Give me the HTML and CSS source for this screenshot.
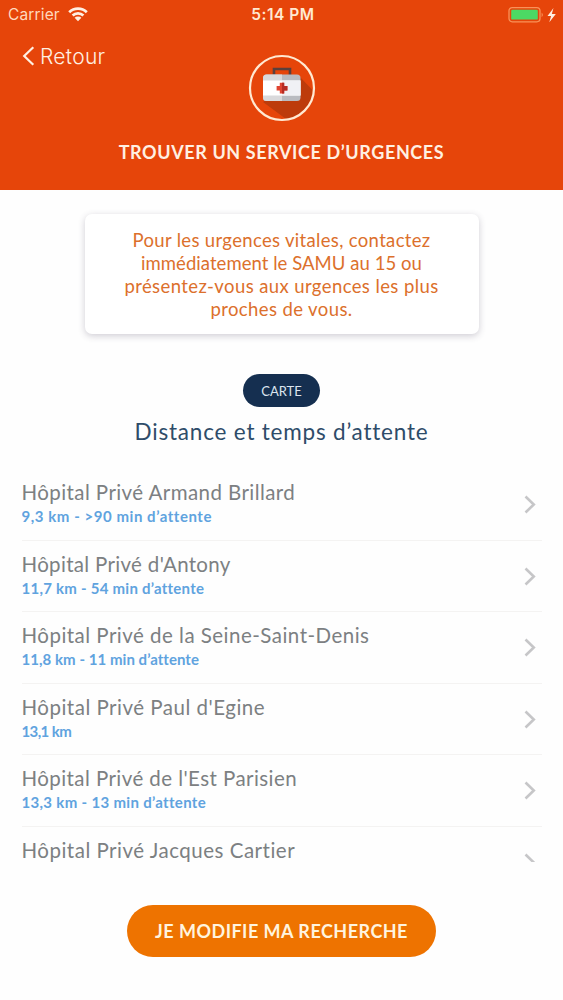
FILE: index.html
```html
<!DOCTYPE html>
<html lang="fr">
<head>
<meta charset="utf-8">
<title>Trouver un service d’urgences</title>
<link rel="stylesheet" href="styles.css">
</head>
<body>
<header class="header">
  <div class="status">
    <div class="status-left"><span class="carrier">Carrier</span>
      <svg width="20" height="15" viewBox="0 0 20 15" fill="none" stroke="#fff0e2" stroke-width="2.7"><path d="M1.2 5.2a12.400 12.400 0 0 1 17.600 0M4.600 8.500a7.700 7.700 0 0 1 10.800 0"/><path d="M10 14.2 6.6 10.8a4.9 4.9 0 0 1 6.8 0z" fill="#fff0e2" stroke="none"/></svg>
    </div>
    <span class="clock">5:14 PM</span>
    <svg class="battery" width="50" height="18" viewBox="0 0 50 18"><rect x="1" y="1.6" width="31" height="14.2" rx="3.2" fill="none" stroke="#f99258" stroke-width="1.3"/><rect x="3.2" y="3.8" width="26.6" height="9.8" rx="1.2" fill="#4cd964"/><path d="M33.6 6.4q2.6 2.4 0 4.8z" fill="#f99258"/><path d="M45.500 2 39.500 10h3.6l-1.8 6.200 6.500-8.200h-4z" fill="#fff0e2"/></svg>
  </div>
  <div class="top">
    <a class="back"><svg width="13" height="20" viewBox="0 0 13 20" fill="none" stroke="#fff0e2" stroke-width="2.2"><path d="M11.3 1.2 2.2 10l9.1 8.8"/></svg><span>Retour</span></a>
    <svg class="kit" width="68" height="68" viewBox="0 0 68 68">
      <path d="M15 48 51 22l13.5 14A31 31 0 0 1 38 65z" fill="#bd3b0b"/>
      <path d="M26 21v-6h16v6" fill="none" stroke="#5b403c" stroke-width="2.600"/>
      <rect x="15" y="20.5" width="37.5" height="26.5" rx="3.5" fill="#b9bbc0"/>
      <path d="M34 20.5H18.5A3.5 3.5 0 0 0 15 24v19.500a3.500 3.500 0 0 0 3.500 3.500H34z" fill="#d9d9db"/>
      <path d="M15 26.500h37.500v15H15z" fill="#fff"/><path d="M34 26.500h18.500v15H34z" fill="#f0f1f5"/>
      <path d="M31.800 28.800h4.400v3.200h3.200v4.400h-3.200v3.200h-4.400v-3.200h-3.200V32h3.200z" fill="#e04431"/>
      <path d="M34 28.800h2.200v3.200h3.200v4.400h-3.200v3.200H34z" fill="#b52c24"/>
      <circle cx="34" cy="34" r="32" fill="none" stroke="#ffe9d2" stroke-width="2.200"/>
    </svg>
  </div>
  <h1 class="title">TROUVER UN SERVICE D’URGENCES</h1>
</header>
<main class="content">
  <p class="alert"><span class="a1">Pour les urgences vitales, contactez</span><br><span class="a2">immédiatement le SAMU au 15 ou</span><br><span class="a3">présentez-vous aux urgences les plus</span><br><span class="a4">proches de vous.</span></p>
  <button class="map">CARTE</button>
  <h2 class="subtitle">Distance et temps d’attente</h2>
  <ul class="list">
    <li class="row"><div><p class="name n1">Hôpital Privé Armand Brillard</p><p class="info i1">9,3 km - &gt;90 min d’attente</p></div><svg class="chevron" width="12" height="19" viewBox="0 0 12 19"><path d="m1.500 1.500 8.300 8-8.300 8"/></svg></li>
    <li class="row"><div><p class="name n2">Hôpital Privé d'Antony</p><p class="info i2">11,7 km - 54 min d’attente</p></div><svg class="chevron" width="12" height="19" viewBox="0 0 12 19"><path d="m1.500 1.500 8.300 8-8.300 8"/></svg></li>
    <li class="row"><div><p class="name n3">Hôpital Privé de la Seine-Saint-Denis</p><p class="info i3">11,8 km - 11 min d’attente</p></div><svg class="chevron" width="12" height="19" viewBox="0 0 12 19"><path d="m1.500 1.500 8.300 8-8.300 8"/></svg></li>
    <li class="row"><div><p class="name n4">Hôpital Privé Paul d'Egine</p><p class="info i4">13,1 km</p></div><svg class="chevron" width="12" height="19" viewBox="0 0 12 19"><path d="m1.500 1.500 8.300 8-8.300 8"/></svg></li>
    <li class="row"><div><p class="name n5">Hôpital Privé de l'Est Parisien</p><p class="info i5">13,3 km - 13 min d’attente</p></div><svg class="chevron" width="12" height="19" viewBox="0 0 12 19"><path d="m1.500 1.500 8.300 8-8.300 8"/></svg></li>
    <li class="row"><div><p class="name n6">Hôpital Privé Jacques Cartier</p></div><svg class="chevron" width="12" height="19" viewBox="0 0 12 19"><path d="m1.500 1.500 8.300 8-8.300 8"/></svg></li>
  </ul>
  <button class="cta">JE MODIFIE MA RECHERCHE</button>
</main>
</body>
</html>
```
FILE: styles.css
```css
* { box-sizing: border-box; margin: 0; padding: 0; }
body { width: 563px; height: 1000px; overflow: hidden; background: #fefefe; font-family: Lato, "Open Sans", sans-serif; font-variant-ligatures: none; }
.header { height: 190px; background: #e6450a; color: #fff0e2; }
.status { height: 30px; display: grid; grid-template-columns: 1fr auto 1fr; align-items: center; padding: 0 5px 1px 8px; font-family: Inter, sans-serif; font-size: 15.5px; }
.status-left { display: flex; align-items: center; gap: 8px; }
.carrier { font-weight: 400; color: #ffd9bd; letter-spacing: .15px; }
.clock { font-weight: 600; color: #ffe9d2; letter-spacing: .5px; }
.battery { justify-self: end; }
.top { height: 92px; display: grid; grid-template-columns: 1fr auto 1fr; align-items: start; padding: 0 22px; }
.back { display: flex; align-items: center; gap: 5px; height: 28px; margin-top: 12px; font-family: Inter, sans-serif; font-size: 21px; font-weight: 300; letter-spacing: .3px; }
.kit { margin-top: 24px; }
.title { margin-top: 18px; line-height: 24px; text-align: center; font-size: 18px; font-weight: 700; letter-spacing: .6px; }
.content { display: flex; flex-direction: column; align-items: center; }
.alert { width: 394px; height: 120px; margin-top: 24px; padding-top: 15px; border-radius: 7px; background: #fff; box-shadow: 0 2px 7px rgba(60, 50, 80, .24); color: #dc702c; font-size: 18.5px; line-height: 23px; text-align: center; white-space: nowrap; }
.a1 { letter-spacing: .33px; }
.a2 { letter-spacing: .05px; }
.a3 { letter-spacing: .4px; }
.a4 { letter-spacing: .4px; }
.map { width: 77px; height: 33px; margin-top: 40px; border: 0; border-radius: 17px; background: #152f50; color: #dce5ef; font: 400 13px Lato, sans-serif; }
.subtitle { margin-top: 9px; line-height: 32px; font-size: 22.5px; font-weight: 400; letter-spacing: .8px; color: #2e4c69; }
.list { width: 520px; height: 393px; margin-top: 21px; list-style: none; overflow: hidden; }
.row { height: 71.500px; display: flex; justify-content: space-between; align-items: flex-start; padding: 11px 5.500px 0 0; border-bottom: 1px solid #f4f3f2; }
.name { line-height: 25px; font-size: 20.500px; color: #7c8082; }
.info { line-height: 22px; font-size: 15px; font-weight: 700; color: #60a3df; }
.n1 { letter-spacing: .42px; }
.n2 { letter-spacing: .32px; }
.n3 { letter-spacing: .48px; }
.n4 { letter-spacing: .5px; }
.n5 { letter-spacing: .43px; }
.n6 { letter-spacing: .5px; }
.i1 { letter-spacing: .55px; }
.i2 { letter-spacing: .25px; }
.i3 { letter-spacing: .05px; }
.i4 { letter-spacing: -.6px; }
.i5 { letter-spacing: .32px; }
.chevron { margin-top: 15px; fill: none; stroke: #c6c6c8; stroke-width: 2.600px; }
.cta { width: 309px; height: 52px; margin-top: 43px; border: 0; border-radius: 26px; background: #ee7300; color: #fff4df; font: 700 18px Lato, sans-serif; letter-spacing: .48px; }
```
